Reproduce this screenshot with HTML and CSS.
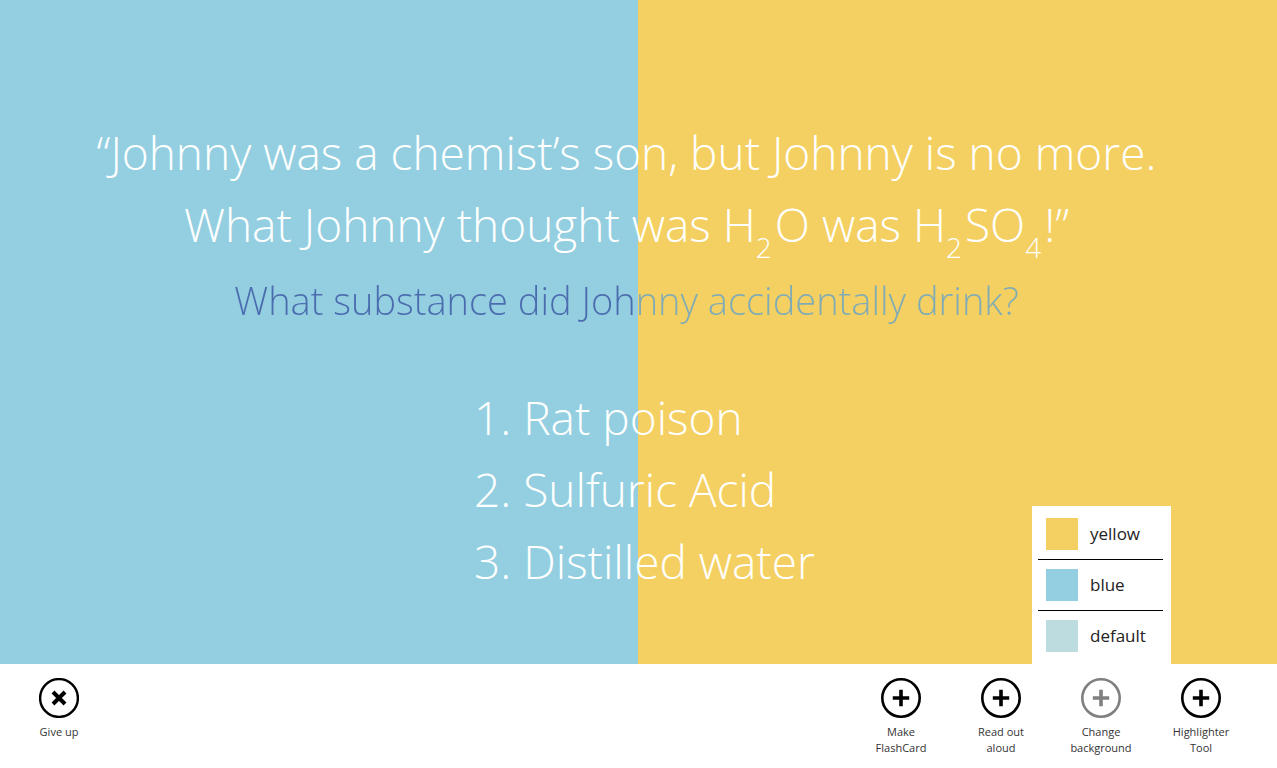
FILE: index.html
```html
<!DOCTYPE html>
<html lang="en">
<head>
<meta charset="utf-8">
<meta name="viewport" content="width=device-width, initial-scale=1">
<title>Flash card quiz</title>
<link rel="stylesheet" href="styles.css">
</head>
<body>
<svg class="defs" aria-hidden="true">
  <symbol id="plus" viewBox="0 0 40 40"><circle cx="20" cy="20" r="18.7" fill="none" stroke="currentColor" stroke-width="2.6"/><path d="M20 11.8v16.4M11.8 20h16.4" stroke="currentColor" stroke-width="3.6"/></symbol>
  <symbol id="cross" viewBox="0 0 40 40"><circle cx="20" cy="20" r="18.9" fill="none" stroke="currentColor" stroke-width="2.4"/><path d="M14 14l12 12M26 14L14 26" stroke="currentColor" stroke-width="4"/></symbol>
</svg>
<main class="card">
  <p class="riddle">“Johnny was a chemist’s son, but Johnny is no more.<br>What Johnny thought was H<sub>2</sub>O was H<sub>2</sub>SO<sub>4</sub>!”</p>
  <h1 class="question">What substance did Johnny accidentally drink?</h1>
  <ol class="answers">
    <li>Rat poison</li>
    <li>Sulfuric Acid</li>
    <li>Distilled water</li>
  </ol>
</main>
<footer class="toolbar">
  <button class="tool" type="button"><svg class="icon"><use href="#cross"/></svg>Give up</button>
  <div class="tools">
    <button class="tool" type="button"><svg class="icon"><use href="#plus"/></svg>Make<br>FlashCard</button>
    <button class="tool" type="button"><svg class="icon"><use href="#plus"/></svg>Read out<br>aloud</button>
    <div class="picker">
      <button class="tool tool-active" type="button" aria-expanded="true"><svg class="icon"><use href="#plus"/></svg>Change<br>background</button>
      <div class="menu">
        <button class="option" type="button"><span class="swatch swatch-yellow"></span>yellow</button>
        <button class="option" type="button"><span class="swatch swatch-blue"></span>blue</button>
        <button class="option" type="button"><span class="swatch swatch-default"></span>default</button>
      </div>
    </div>
    <button class="tool" type="button"><svg class="icon"><use href="#plus"/></svg>Highlighter<br>Tool</button>
  </div>
</footer>
</body>
</html>
```
FILE: styles.css
```css
* { box-sizing: border-box; }

body {
  margin: 0;
  min-height: 100vh;
  display: flex;
  flex-direction: column;
  background: #fff;
  font-family: "Open Sans", "Noto Sans", sans-serif;
}

.defs { display: none; }

.card {
  flex: 1;
  padding-top: 116px;
  background: linear-gradient(90deg, #93cfe0 50%, #f4d062 50%);
  color: #fff;
  font-size: 46px;
  font-weight: 300;
  line-height: 72px;
}

.riddle {
  margin: 0;
  padding-right: 24px;
  text-align: center;
}

.riddle sub {
  margin-right: 3px;
  font-size: 28px;
  line-height: 0;
  vertical-align: -16px;
}

.question {
  margin: 0;
  padding-right: 24px;
  background: linear-gradient(90deg, #4b6cae 50%, #7eabb5 50%);
  background-clip: text;
  -webkit-background-clip: text;
  color: transparent;
  font-size: 38px;
  font-weight: 300;
  line-height: 80px;
  text-align: center;
}

.answers {
  width: fit-content;
  margin: 41px auto 0;
  padding: 0 0 0 12px;
  list-style-position: inside;
}

.toolbar {
  display: flex;
  justify-content: space-between;
  min-height: 104px;
  padding: 14px 26px 8px 9px;
}

.tools { display: flex; }

.picker { position: relative; }

.tool {
  display: flex;
  flex-direction: column;
  align-items: center;
  width: 100px;
  padding: 0;
  border: 0;
  background: none;
  color: #333;
  font: 11px/16px "Open Sans", "Noto Sans", sans-serif;
  text-align: center;
}

.icon {
  width: 40px;
  height: 40px;
  margin-bottom: 6px;
  color: #000;
}

.tool-active .icon { color: #808080; }

.menu {
  position: absolute;
  bottom: calc(100% + 14px);
  left: -19px;
  width: 139px;
  padding: 3px 8px 3px 6px;
  background: #fff;
}

.option {
  display: flex;
  align-items: center;
  gap: 12px;
  width: 100%;
  height: 50px;
  padding: 0 8px;
  border: 0;
  background: none;
  color: #222;
  font: 17px/24px "Open Sans", "Noto Sans", sans-serif;
}

.option + .option {
  height: 51px;
  border-top: 1px solid #000;
}

.swatch {
  width: 32px;
  height: 32px;
}

.swatch-yellow { background: #f4d062; }
.swatch-blue { background: #93cfe0; }
.swatch-default { background: #bddce0; }
```
